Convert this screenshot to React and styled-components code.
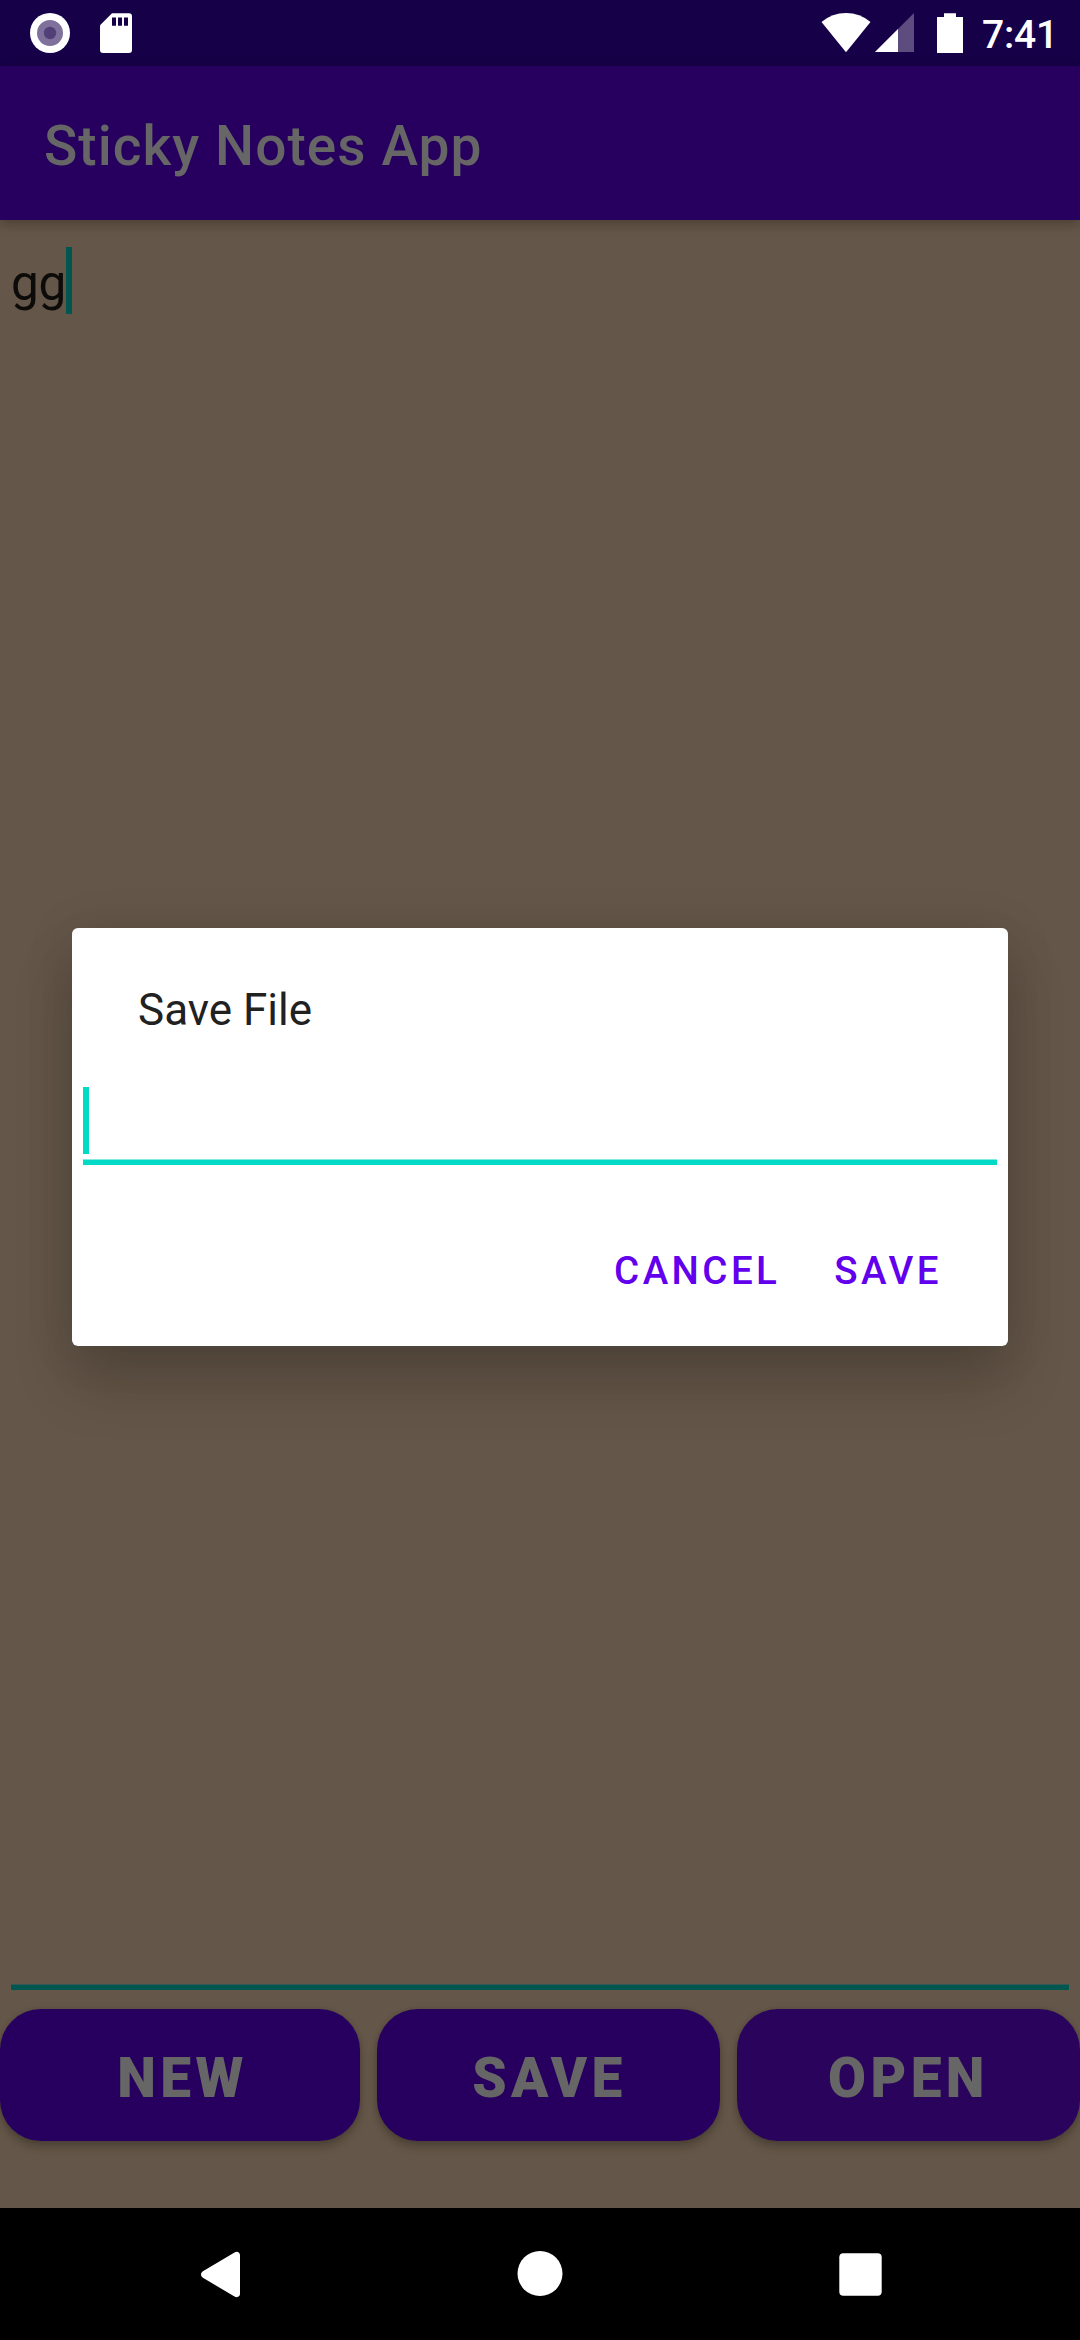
import React from "react";
import styled, { createGlobalStyle } from "styled-components";

const GlobalStyle = createGlobalStyle`
  * { box-sizing: border-box; }
  body { margin: 0; font-family: Roboto, "Noto Sans", sans-serif; }
`;

const Screen = styled.div`
  position: relative;
  display: flex;
  flex-direction: column;
  width: 1080px;
  height: 2340px;
  overflow: hidden;
  background: #645648;
`;

const StatusBar = styled.header`
  display: flex;
  justify-content: space-between;
  flex: 0 0 66px;
  padding: 13px 27px 0 30px;
  background: #160047;
`;

const StatusGroup = styled.div`
  display: flex;
  align-items: flex-start;
  svg { display: block; flex: none; }
`;

const Gap = styled.span`
  flex: none;
  width: ${(p) => p.$w}px;
`;

const Clock = styled.span`
  width: 71px;
  color: #fff;
  font-size: 39px;
  font-weight: 500;
  line-height: 44px;
  letter-spacing: -0.2px;
  white-space: nowrap;
`;

const Toolbar = styled.div`
  z-index: 1;
  display: flex;
  align-items: center;
  flex: 0 0 154px;
  padding: 6px 44px 0;
  background: #27005f;
  box-shadow: 0 4px 11px rgba(0, 0, 0, 0.25);
`;

const Title = styled.h1`
  margin: 0;
  color: #666;
  font-size: 55px;
  font-weight: 500;
  letter-spacing: 1.06px;
`;

const Content = styled.main`
  display: flex;
  flex-direction: column;
  flex: 1;
`;

const Note = styled.div`
  display: flex;
  align-items: flex-start;
  height: 1770px;
  margin: 0 11px;
  padding-top: 27px;
  background: linear-gradient(#335751 1px, #01574f 1px) bottom / 100% 6px no-repeat;
  color: #0d0b09;
  font-size: 49.5px;
  line-height: 72px;
  letter-spacing: -0.3px;
`;

const Caret = styled.span`
  flex: none;
  width: 6px;
  height: 67px;
  background: ${(p) => p.$color};
`;

const Actions = styled.div`
  display: grid;
  grid-template-columns: 360px 343px 343px;
  column-gap: 17px;
  margin-top: 19px;
`;

const ActionButton = styled.button`
  height: 132px;
  padding: 6px 0 0 ${(p) => p.$shift || 0}px;
  border: 0;
  border-radius: 41px;
  background: ${(p) => p.$bg || "#27005f"};
  box-shadow: 0 6px 8px rgba(0, 0, 0, 0.22), 0 0 5px rgba(0, 0, 0, 0.12);
  color: #666;
  font-family: inherit;
  font-size: 55px;
  font-weight: 900;
  letter-spacing: 0.08em;
`;

const NavBar = styled.nav`
  display: flex;
  flex: 0 0 132px;
  align-items: flex-start;
  padding: 43px 198px 0 201px;
  justify-content: space-between;
  background: #000;
  svg { display: block; }
`;

const Overlay = styled.div`
  position: absolute;
  inset: 66px 0 132px;
  z-index: 2;
  display: flex;
  align-items: center;
  justify-content: center;
`;

const Dialog = styled.section`
  display: flex;
  flex-direction: column;
  width: 936px;
  height: 418px;
  border-radius: 6px;
  background: #fff;
  box-shadow: 0 37px 58px rgba(0, 0, 0, 0.18), 0 4px 50px rgba(0, 0, 0, 0.1);
`;

const DialogTitle = styled.h2`
  margin: 56px 66px 0;
  color: #212121;
  font-size: 44px;
  font-weight: 400;
  line-height: 52px;
`;

const Field = styled.div`
  height: 78px;
  margin: 51px 11px 0;
  background: linear-gradient(#81ede2 1px, #03dac5 1px) bottom / 100% 6px no-repeat;
`;

const DialogActions = styled.div`
  display: flex;
  justify-content: flex-end;
  gap: 54px;
  margin-top: 83px;
  padding-right: 66px;
`;

const TextButton = styled.button`
  padding: 0;
  border: 0;
  background: none;
  color: #6200ee;
  font-family: inherit;
  font-size: 38.5px;
  font-weight: 500;
  line-height: 46px;
  letter-spacing: 0.0893em;
`;

const RecordIcon = () => (
  <svg width="40" height="40" viewBox="0 0 40 40">
    <circle cx="20" cy="20" r="20" fill="#fff" />
    <circle cx="20" cy="20" r="13" fill="#7f719b" />
    <circle cx="20" cy="20" r="6.2" fill="#513f78" />
  </svg>
);

const CardIcon = () => (
  <svg width="32" height="40" viewBox="0 0 32 40">
    <path
      d="M12 0.3H29A3 3 0 0 1 32 3.3V37A3 3 0 0 1 29 40H3A3 3 0 0 1 0 37V12.3Z"
      fill="#fff"
    />
    <path d="M12 4.5h4v8.3h-4zM18 4.5h4v8.3h-4zM24 4.5h4v8.3h-4z" fill="#160047" />
  </svg>
);

const WifiIcon = () => (
  <svg width="50" height="40" viewBox="0 0 50 40">
    <path d="M0.5 9Q11 0 25 0T49.5 9L25 39.3Z" fill="#fff" />
  </svg>
);

const SignalIcon = () => (
  <svg width="39" height="39" viewBox="0 0 39 39">
    <path d="M39 0V39H0Z" fill="#5c4d7e" />
    <path d="M23 16V39H0Z" fill="#fff" />
  </svg>
);

const BatteryIcon = () => (
  <svg width="26" height="40" viewBox="0 0 26 40">
    <path d="M7 0.3H19V4H26V40H0V4H7Z" fill="#fff" />
  </svg>
);

const BackIcon = () => (
  <svg width="39" height="47" viewBox="0 0 39 47">
    <path
      d="M33.5 1.5C36 0 39 1.2 39 4.2V42.8C39 45.8 36 47 33.5 45.5L1.9 26.8C-0.6 25.2 -0.6 21.8 1.9 20.2Z"
      fill="#fff"
    />
  </svg>
);

const HomeIcon = () => (
  <svg width="46" height="46" viewBox="0 0 46 46">
    <circle cx="23" cy="22.5" r="22.5" fill="#fff" />
  </svg>
);

const RecentsIcon = () => (
  <svg width="43" height="46" viewBox="0 0 43 46">
    <rect x="0.3" y="2.3" width="42.4" height="42.4" rx="4" fill="#fff" />
  </svg>
);

export default function App() {
  return (
    <>
      <GlobalStyle />
      <Screen>
        <StatusBar>
          <StatusGroup>
            <RecordIcon />
            <Gap $w={30} />
            <CardIcon />
          </StatusGroup>
          <StatusGroup>
            <WifiIcon />
            <Gap $w={4} />
            <SignalIcon />
            <Gap $w={23} />
            <BatteryIcon />
            <Gap $w={19} />
            <Clock>7:41</Clock>
          </StatusGroup>
        </StatusBar>
        <Toolbar>
          <Title>Sticky Notes App</Title>
        </Toolbar>
        <Content>
          <Note>
            gg
            <Caret $color="#01574f" />
          </Note>
          <Actions>
            <ActionButton $shift={5}>NEW</ActionButton>
            <ActionButton $shift={2}>SAVE</ActionButton>
            <ActionButton $bg="#2a045c">OPEN</ActionButton>
          </Actions>
        </Content>
        <NavBar>
          <BackIcon />
          <HomeIcon />
          <RecentsIcon />
        </NavBar>
        <Overlay>
          <Dialog>
            <DialogTitle>Save File</DialogTitle>
            <Field>
              <Caret as="div" $color="#03dac5" />
            </Field>
            <DialogActions>
              <TextButton>CANCEL</TextButton>
              <TextButton>SAVE</TextButton>
            </DialogActions>
          </Dialog>
        </Overlay>
      </Screen>
    </>
  );
}
